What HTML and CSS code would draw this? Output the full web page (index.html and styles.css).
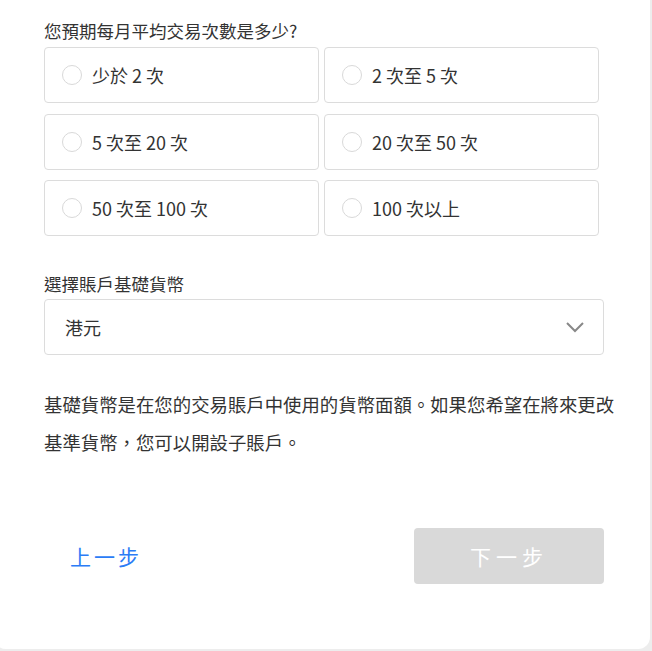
FILE: index.html
```html
<!doctype html>
<html>
<head>
<meta charset="utf-8">
<title>開戶 - 交易設定</title>
<link rel="stylesheet" href="styles.css">
</head>
<body>
<section class="card">
	<div class="content">
		<p class="question">您預期每月平均交易次數是多少?</p>
		<ul class="options">
			<li><span class="radio"></span>少於 2 次</li>
			<li><span class="radio"></span>2 次至 5 次</li>
			<li><span class="radio"></span>5 次至 20 次</li>
			<li><span class="radio"></span>20 次至 50 次</li>
			<li><span class="radio"></span>50 次至 100 次</li>
			<li><span class="radio"></span>100 次以上</li>
		</ul>

		<p class="label">選擇賬戶基礎貨幣</p>
		<div class="select">
			<span>港元</span>
			<svg class="arrow" width="20" height="12" viewBox="0 0 20 12">
				<path d="M2 2 L10 10 L18 2" fill="none" stroke="#888" stroke-width="2"/>
			</svg>
		</div>

		<p class="note">基礎貨幣是在您的交易賬戶中使用的貨幣面額。如果您希望在將來更改基準貨幣，您可以開設子賬戶。</p>

		<div class="actions">
			<a href="javascript:;" class="prev">上一步</a>
			<a href="javascript:;" class="next">下一步</a>
		</div>
	</div>
</section>
</body>
</html>
```

FILE: styles.css
```css
html, body {
	margin: 0;
	padding: 0;
	background: #ededed;
}
body {
	font-family: "Noto Sans CJK TC", "Noto Sans", sans-serif;
	color: #333;
	overflow: hidden;
}
.card {
	width: 656px;
	height: 649px;
	margin-left: -6px;
	background: #fff;
	border-radius: 0 0 12px 12px;
	box-sizing: border-box;
	padding: 19px 0 0 50px;
}
.content {
	width: 560px;
}
.question {
	margin: 0 0 4px;
	font-size: 17.5px;
	line-height: 24px;
}
.options {
	display: grid;
	grid-template-columns: 275px 275px;
	grid-auto-rows: 56px;
	column-gap: 5px;
	row-gap: 10.5px;
	margin: 0;
	padding: 0;
	list-style: none;
}
.options li {
	display: flex;
	align-items: center;
	box-sizing: border-box;
	border: 1px solid #dcdcdc;
	border-radius: 4px;
	padding-left: 17px;
	font-size: 18px;
}
.radio {
	width: 20px;
	height: 20px;
	box-sizing: border-box;
	border: 1px solid #d9d9d9;
	border-radius: 50%;
	margin-right: 10px;
}
.label {
	margin: 36px 0 3px;
	font-size: 17.5px;
	line-height: 24px;
}
.select {
	display: flex;
	align-items: center;
	justify-content: space-between;
	height: 56px;
	box-sizing: border-box;
	border: 1px solid #dcdcdc;
	border-radius: 4px;
	padding: 0 18px 0 20px;
	font-size: 18px;
}
.note {
	width: 580px;
	margin: 30px 0 0;
	font-size: 18.4px;
	line-height: 38px;
}
.actions {
	display: flex;
	align-items: center;
	justify-content: space-between;
	margin-top: 67px;
}
.prev {
	margin-left: 26px;
	color: #2b7cf6;
	font-size: 21px;
	letter-spacing: 3px;
	text-decoration: none;
}
.next {
	width: 190px;
	height: 56px;
	line-height: 56px;
	background: #d9d9d9;
	border-radius: 4px;
	color: #fff;
	font-size: 21px;
	letter-spacing: 5px;
	text-align: center;
	text-decoration: none;
}
```
